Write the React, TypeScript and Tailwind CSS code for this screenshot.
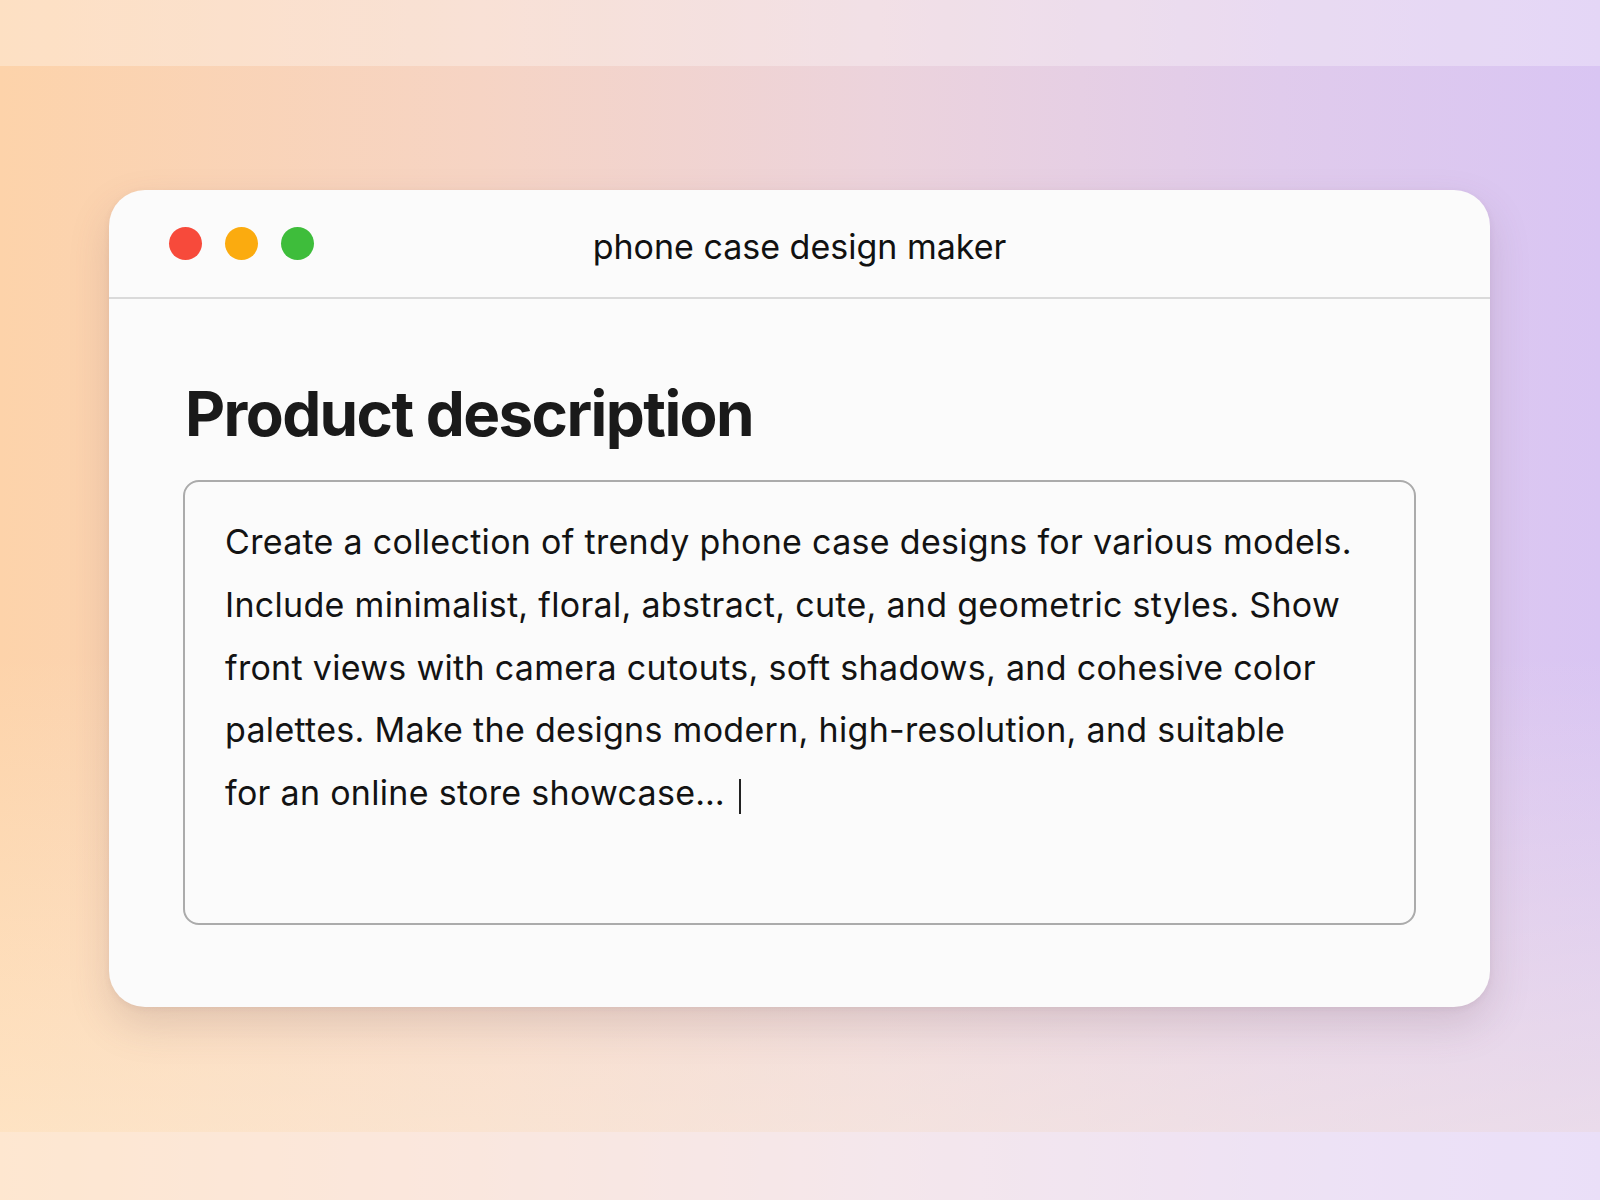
import React from "react";

export default function App() {
  const lines = [
    "Create a collection of trendy phone case designs for various models.",
    "Include minimalist, floral, abstract, cute, and geometric styles. Show",
    "front views with camera cutouts, soft shadows, and cohesive color",
    "palettes. Make the designs modern, high-resolution, and suitable",
  ];
  return (
    <div
      className="w-[1600px] h-[1200px] flex flex-col bg-[linear-gradient(90deg,#fdd3aa_0%,#f6d4c4_30%,#ecd3dc_55%,#e0cbec_80%,#d9c5f3_100%)]"
      style={{ fontFamily: "Inter, 'Noto Sans', sans-serif" }}
    >
      <div className="h-[66px] bg-white/30" />
      <div className="flex-1 bg-[linear-gradient(180deg,rgba(255,255,255,0)_0%,rgba(255,255,255,0)_55%,rgba(255,246,225,0.45)_100%)]">
        <div className="ml-[109px] mt-[124px] w-[1381px] h-[817px] rounded-[36px] bg-[#fbfbfb] shadow-[0_18px_40px_rgba(110,80,90,0.18),0_2px_6px_rgba(110,80,90,0.08)] flex flex-col overflow-hidden">
          <div className="h-[109px] border-b-2 border-[#dadada] grid grid-cols-[1fr_auto_1fr] items-center">
            <div className="flex items-center gap-[23px] pl-[60px]">
              <div className="w-[33px] h-[33px] rounded-full bg-[#f74a3b]" />
              <div className="w-[33px] h-[33px] rounded-full bg-[#fbab0f]" />
              <div className="w-[33px] h-[33px] rounded-full bg-[#3ebd3b]" />
            </div>
            <div className="text-[34px] leading-[41px] pt-[5px] text-[#111] whitespace-nowrap">
              phone case design maker
            </div>
            <div />
          </div>
          <div className="px-[74px] pt-[76px]">
            <h1 className="text-[62px] leading-[78px] font-bold text-[#1a1a1a] tracking-[-1.6px] pl-[2px]">
              Product description
            </h1>
            <div className="mt-[27px] h-[445px] border-2 border-[#ababab] rounded-[16px] pt-[29px] pl-[40px] text-[34px] leading-[62.8px] text-[#131313] tracking-[0.3px]">
              {lines.map((l) => (
                <div key={l} className="whitespace-nowrap">
                  {l}
                </div>
              ))}
              <div className="whitespace-nowrap flex items-center">
                <span>for an online store showcase…</span>
                <span className="inline-block w-[2px] h-[35px] bg-[#222] ml-[14px] mt-[6px]" />
              </div>
            </div>
          </div>
        </div>
      </div>
      <div className="h-[68px] bg-white/45" />
    </div>
  );
}
